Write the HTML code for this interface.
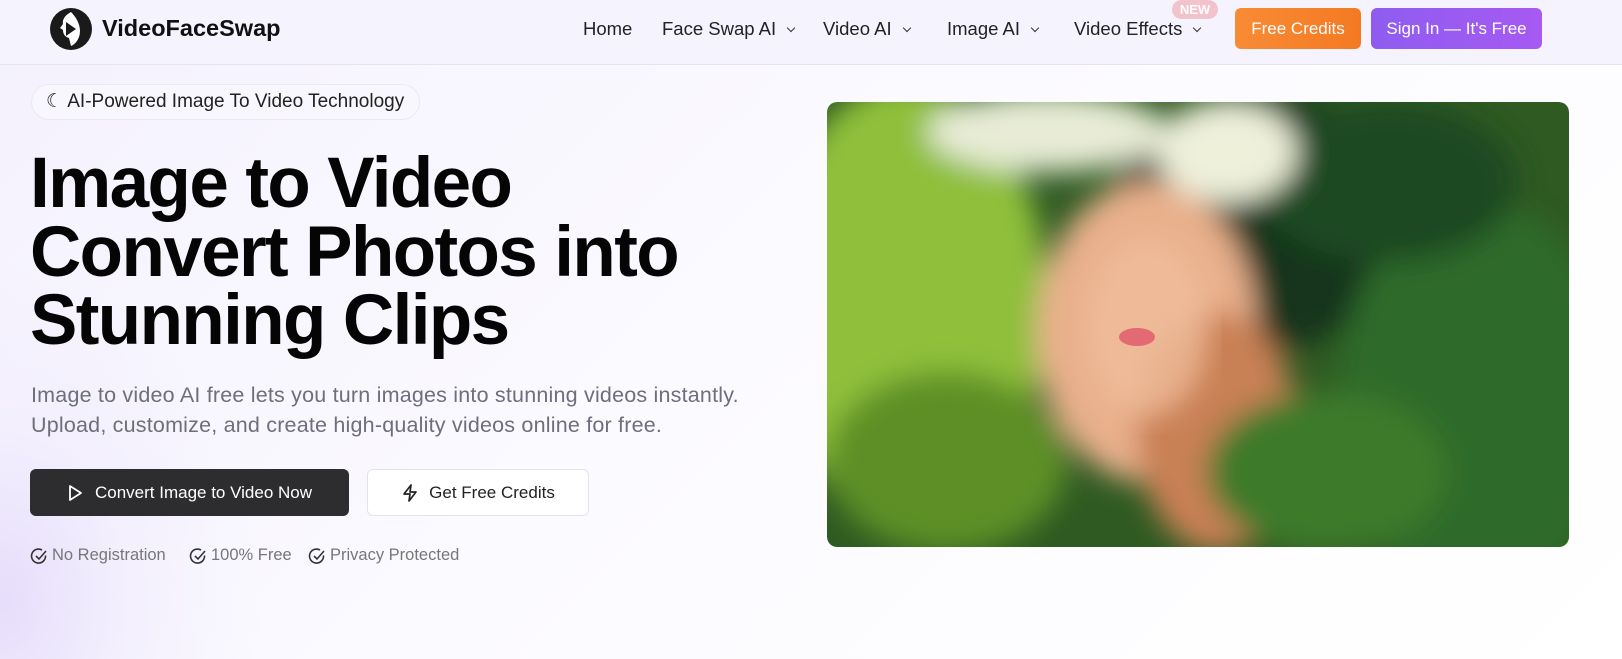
<!DOCTYPE html>
<html><head><meta charset="utf-8"><style>
*{margin:0;padding:0;box-sizing:border-box}
body{width:1622px;height:659px;overflow:hidden;font-family:"Liberation Sans",sans-serif;color:#111;position:relative;
background:radial-gradient(ellipse 260px 340px at 0px 600px,#e6ddfb 0%,rgba(240,235,253,.6) 50%,rgba(255,255,255,0) 100%),linear-gradient(135deg,#f4f1fd 0%,#fbfaff 45%,#ffffff 100%);}
.hdr{position:absolute;left:0;top:0;width:1622px;height:65px;background:#f5f3fd;border-bottom:1px solid #e6e3ef}
.a{position:absolute;white-space:nowrap}
.nav{font-size:18.5px;color:#222;top:18px}
.chev{display:inline-block;width:6px;height:6px;border-right:1.6px solid #333;border-bottom:1.6px solid #333;transform:rotate(45deg);margin-left:12px;position:relative;top:-4px}
.btn{position:absolute;border-radius:6px;color:#fff;font-size:17px;display:flex;align-items:center;justify-content:center}
.chk{font-size:16.5px;color:#777;top:546px;display:flex;align-items:center}
.chk svg{margin-right:4px}
</style></head><body>
<div class="hdr"></div>
<svg class="a" style="left:49px;top:7px" width="44" height="44" viewBox="0 0 44 44"><circle cx="22" cy="22" r="21" fill="#1a1a1a"/><path d="M22 5c-6 3-9 8-8 12l-3 4 3 2c0 4 2 7 6 8l2 8c5-2 9-8 9-15s-4-14-9-19z" fill="#fff"/><path d="M17 15l10 7-10 7z" fill="#1a1a1a"/></svg>
<div class="a" style="left:102px;top:15px;font-size:23.5px;font-weight:bold;color:#111">VideoFaceSwap</div>
<div class="a nav" style="left:583px">Home</div>
<div class="a nav" style="left:662px">Face Swap AI<span class="chev"></span></div>
<div class="a nav" style="left:823px">Video AI<span class="chev"></span></div>
<div class="a nav" style="left:947px">Image AI<span class="chev"></span></div>
<div class="a nav" style="left:1074px">Video Effects<span class="chev"></span></div>
<div class="a" style="left:1172px;top:0;width:46px;height:19px;border-radius:10px;background:#f3c3cb;color:#fff;font-size:13px;font-weight:bold;text-align:center;line-height:19px">NEW</div>
<div class="btn" style="left:1235px;top:8px;width:126px;height:41px;background:linear-gradient(90deg,#f88b35,#f47a22)">Free Credits</div>
<div class="btn" style="left:1371px;top:8px;width:171px;height:41px;background:linear-gradient(90deg,#8f5cf0,#a65af2)">Sign In — It's Free</div>
<div class="a" style="left:31px;top:84px;width:389px;height:36px;border:1px solid #ebe8f3;border-radius:18px;background:#f8f7fd;font-size:19px;color:#222;line-height:34px;padding-left:14px">☾ AI-Powered Image To Video Technology</div>
<div class="a" style="left:30px;top:150px;font-size:71px;font-weight:bold;letter-spacing:-1.6px;line-height:68.5px;color:#050505">Image to Video<br>Convert Photos into<br>Stunning Clips</div>
<div class="a" style="left:31px;top:380px;font-size:21.5px;letter-spacing:.2px;line-height:30px;color:#6e6e7c">Image to video AI free lets you turn images into stunning videos instantly.<br>Upload, customize, and create high-quality videos online for free.</div>
<div class="btn" style="left:30px;top:469px;width:319px;height:47px;background:#2d2d30"><svg width="16" height="18" viewBox="0 0 16 18" style="margin-right:12px"><path d="M3 2l11 7-11 7z" fill="none" stroke="#fff" stroke-width="1.8" stroke-linejoin="round"/></svg>Convert Image to Video Now</div>
<div class="btn" style="left:367px;top:469px;width:222px;height:47px;background:#fff;border:1px solid #e3e3e8;color:#222"><svg width="18" height="20" viewBox="0 0 18 20" style="margin-right:10px"><path d="M10 2L3 11h6l-1 7 7-9H9z" fill="none" stroke="#222" stroke-width="1.7" stroke-linejoin="round"/></svg>Get Free Credits</div>
<div class="a chk" style="left:30px"><svg width="18" height="18" viewBox="0 0 18 18"><path d="M15.5 8.5A7 7 0 1 1 12 3" fill="none" stroke="#333" stroke-width="1.6"/><path d="M6 9l3 3 7-8" fill="none" stroke="#333" stroke-width="1.6"/></svg>No Registration</div>
<div class="a chk" style="left:189px"><svg width="18" height="18" viewBox="0 0 18 18"><path d="M15.5 8.5A7 7 0 1 1 12 3" fill="none" stroke="#333" stroke-width="1.6"/><path d="M6 9l3 3 7-8" fill="none" stroke="#333" stroke-width="1.6"/></svg>100% Free</div>
<div class="a chk" style="left:308px"><svg width="18" height="18" viewBox="0 0 18 18"><path d="M15.5 8.5A7 7 0 1 1 12 3" fill="none" stroke="#333" stroke-width="1.6"/><path d="M6 9l3 3 7-8" fill="none" stroke="#333" stroke-width="1.6"/></svg>Privacy Protected</div>
<svg class="a" style="left:827px;top:102px;border-radius:10px" width="742" height="445" viewBox="0 0 742 445">
<defs><filter id="b"><feGaussianBlur stdDeviation="14"/></filter><clipPath id="c"><rect width="742" height="445" rx="10"/></clipPath></defs>
<g clip-path="url(#c)">
<rect width="742" height="445" fill="#2f5a22"/>
<g filter="url(#b)">
<ellipse cx="80" cy="200" rx="140" ry="220" fill="#8fbf3a"/>
<ellipse cx="120" cy="360" rx="120" ry="90" fill="#5d8f28"/>
<ellipse cx="430" cy="120" rx="150" ry="130" fill="#13351f"/>
<ellipse cx="650" cy="300" rx="140" ry="200" fill="#2d6b2a"/>
<ellipse cx="320" cy="230" rx="110" ry="150" fill="#e9b08c"/>
<ellipse cx="390" cy="330" rx="80" ry="120" fill="#c98055"/>
<ellipse cx="560" cy="80" rx="130" ry="80" fill="#1d4a22"/>
<ellipse cx="220" cy="30" rx="120" ry="40" fill="#e8ecd6"/>
<ellipse cx="400" cy="50" rx="70" ry="50" fill="#eef0da"/>
<ellipse cx="500" cy="370" rx="120" ry="80" fill="#3d7a2c"/>
</g>
<ellipse cx="320" cy="225" rx="62" ry="90" fill="#f0bd9b" opacity=".8" filter="url(#b)"/>
<ellipse cx="310" cy="235" rx="18" ry="9" fill="#e0556a" opacity=".8"/>
</g></svg>
</body></html>
